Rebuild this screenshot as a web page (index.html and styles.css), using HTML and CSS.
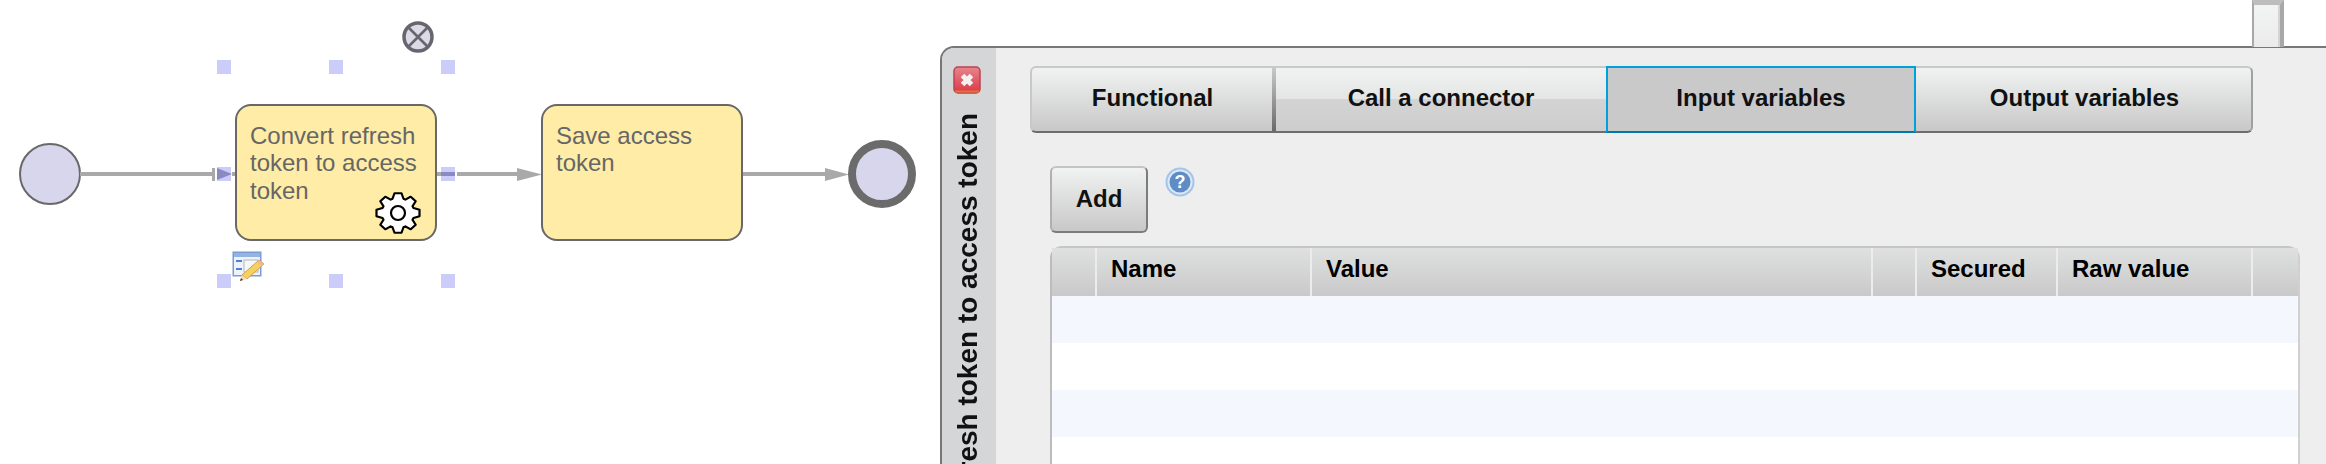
FILE: index.html
```html
<!DOCTYPE html>
<html lang="en">
    <head>
        <meta charset="UTF-8" />
        <title>Process editor</title>
        <link rel="stylesheet" href="styles.css">
    </head>
    <body>
        <div class="diagram">
            <svg class="edges" width="940" height="464" viewBox="0 0 940 464">
                <circle class="event" cx="50" cy="174" r="30" />

                <!-- start -> first task -->
                <line class="edge" x1="80" y1="174" x2="213" y2="174" />
                <rect class="edge-end" x="212" y="168" width="3" height="13" />
                <line class="edge" x1="232" y1="174" x2="236" y2="174" />

                <!-- first task -> second task -->
                <line class="edge" x1="437" y1="174" x2="441" y2="174" />
                <line class="edge" x1="457" y1="174" x2="520" y2="174" />
                <polygon class="arrow" points="517,168 542,174.5 517,181" />

                <!-- second task -> end -->
                <line class="edge" x1="743" y1="174" x2="828" y2="174" />
                <polygon class="arrow" points="825,168 849,174.5 825,181" />

                <circle class="event event-end" cx="882" cy="174" r="30" />

                <!-- selection handles -->
                <rect class="handle" x="217" y="60" width="14" height="14" />
                <rect class="handle" x="329" y="60" width="14" height="14" />
                <rect class="handle" x="441" y="60" width="14" height="14" />
                <rect class="handle" x="217" y="167" width="14" height="14" />
                <rect class="handle" x="441" y="167" width="14" height="14" />
                <rect class="handle" x="217" y="274" width="14" height="14" />
                <rect class="handle" x="329" y="274" width="14" height="14" />
                <rect class="handle" x="441" y="274" width="14" height="14" />

                <polygon class="edge-selected" points="217,168 232,174 217,180" />
                <rect class="edge-selected" x="441" y="172" width="14" height="4" />
            </svg>

            <div class="task task-first">Convert refresh token to access token</div>
            <div class="task task-second">Save access token</div>

            <svg class="gear" width="50" height="46" viewBox="-25 -23 50 46">
                <polygon
                    transform="scale(1 0.92)"
                    points="-5.5,-15.5 -3.5,-21.5 3.5,-21.5 5.5,-15.5 7.4,-14.5 12.7,-17.7 17.7,-12.7 14.5,-7.4 15.5,-5.5 21.5,-3.5 21.5,3.5 15.5,5.5 14.5,7.4 17.7,12.7 12.7,17.7 7.4,14.5 5.5,15.5 3.5,21.5 -3.5,21.5 -5.5,15.5 -7.4,14.5 -12.7,17.7 -17.7,12.7 -14.5,7.4 -15.5,5.5 -21.5,3.5 -21.5,-3.5 -15.5,-5.5 -14.5,-7.4 -17.7,-12.7 -12.7,-17.7 -7.4,-14.5"
                />
                <circle cx="0" cy="0" r="7" />
            </svg>

            <svg class="delete-icon" width="34" height="34" viewBox="0 0 34 34">
                <circle cx="17" cy="17" r="14" />
                <path d="M7.5 7.5 L26.5 26.5 M26.5 7.5 L7.5 26.5" />
            </svg>

            <svg class="edit-icon" width="34" height="32" viewBox="0 0 34 32">
                <rect x="0.5" y="0.5" width="29" height="25" fill="#7b9cd2" />
                <rect x="2" y="2" width="26" height="4" fill="#93b3e4" />
                <rect x="2" y="6" width="26" height="18" fill="#eef2f9" />
                <rect x="4" y="9" width="6" height="2" fill="#4f7fd0" />
                <rect x="4" y="17" width="6" height="2" fill="#4f7fd0" />
                <rect x="12" y="9" width="14" height="12" fill="#f7f7f7" stroke="#b4b8be" />
                <path d="M10 24 L27 9 L32 13 L15 28 Z" fill="#f3d25e" stroke="#d79a54" />
                <path d="M27 9 L32 13 L30 15 L25 11 Z" fill="#eeb98e" />
                <path d="M10 24 L15 28 L8 30 Z" fill="#f2dcb4" />
                <path d="M9 27 L11 29 L8 30 Z" fill="#4b2d10" />
            </svg>
        </div>

        <div class="scroll-tab"></div>

        <div class="panel">
            <div class="panel-side">
                <svg class="panel-close" width="28" height="28" viewBox="0 0 28 28">
                    <defs>
                        <linearGradient id="close-fill" x1="0" y1="0" x2="0" y2="1">
                            <stop offset="0" stop-color="#e9858e" />
                            <stop offset="0.55" stop-color="#e05a66" />
                            <stop offset="1" stop-color="#d83a44" />
                        </linearGradient>
                    </defs>
                    <rect x="1" y="1" width="26" height="26" rx="4" fill="url(#close-fill)" stroke="#b9444e" stroke-width="1.5" />
                    <rect x="2" y="24.5" width="24" height="2" fill="#ea7238" />
                    <path class="close-mark" d="M9.5 9.5 L18.5 18.5 M18.5 9.5 L9.5 18.5" />
                </svg>
                <div class="panel-title">Convert refresh token to access token</div>
            </div>

            <div class="panel-body">
                <div class="tabs">
                    <button class="tab tab-functional">Functional</button>
                    <button class="tab tab-connector">Call a connector</button>
                    <button class="tab tab-input active">Input variables</button>
                    <button class="tab tab-output">Output variables</button>
                </div>

                <div class="actions">
                    <button class="add-button">Add</button>
                    <svg class="help-icon" width="30" height="30" viewBox="0 0 30 30">
                        <circle cx="15" cy="15" r="14.5" fill="#a6c4e8" />
                        <circle cx="15" cy="15" r="12.5" fill="#dbe8f7" />
                        <circle cx="15" cy="15" r="10.5" fill="#5f8cc4" />
                        <text x="15" y="21" text-anchor="middle" class="help-mark">?</text>
                    </svg>
                </div>

                <table class="variables">
                    <colgroup>
                        <col class="col-index" />
                        <col class="col-name" />
                        <col class="col-value" />
                        <col class="col-gap" />
                        <col class="col-secured" />
                        <col class="col-raw" />
                        <col class="col-last" />
                    </colgroup>
                    <thead>
                        <tr>
                            <th></th>
                            <th>Name</th>
                            <th>Value</th>
                            <th></th>
                            <th>Secured</th>
                            <th>Raw value</th>
                            <th></th>
                        </tr>
                    </thead>
                    <tbody>
                        <tr class="odd"><td></td><td></td><td></td><td></td><td></td><td></td><td></td></tr>
                        <tr><td></td><td></td><td></td><td></td><td></td><td></td><td></td></tr>
                        <tr class="odd"><td></td><td></td><td></td><td></td><td></td><td></td><td></td></tr>
                        <tr><td></td><td></td><td></td><td></td><td></td><td></td><td></td></tr>
                    </tbody>
                </table>
            </div>
        </div>
    </body>
</html>
```

FILE: styles.css
```css
html,
body {
    height: 100%;
}

body {
    margin: 0;
    background-color: #fff;
    font-family: "Liberation Sans", Arial, sans-serif;
    display: flex;
    overflow: hidden;
    position: relative;
}

/* diagram */

.diagram {
    position: relative;
    flex: 0 0 940px;
    height: 464px;
}

.edges {
    position: absolute;
    left: 0;
    top: 0;
}

.event {
    fill: #d8d6ec;
    stroke: #686868;
    stroke-width: 2;
}

.event-end {
    stroke: #6b6b6b;
    stroke-width: 8;
}

.edge {
    stroke: #a9a9a9;
    stroke-width: 4;
}

.edge-end,
.arrow {
    fill: #a9a9a9;
}

.handle {
    fill: #ccccfa;
}

.edge-selected {
    fill: #8a8ac2;
}

.task {
    position: absolute;
    top: 104px;
    box-sizing: border-box;
    width: 202px;
    height: 137px;
    padding: 16px 10px 0 13px;
    background-color: #ffeca6;
    border: 2px solid #686868;
    border-radius: 16px;
    color: #666;
    font-size: 24px;
    line-height: 27.3px;
}

.task-first {
    left: 235px;
}

.task-second {
    left: 541px;
}

.gear {
    position: absolute;
    left: 373px;
    top: 190px;
}

.gear polygon,
.gear circle {
    fill: #fff;
    stroke: #000;
    stroke-width: 2.2;
    stroke-linejoin: round;
}

.delete-icon {
    position: absolute;
    left: 401px;
    top: 20px;
    filter: blur(0.5px);
}

.delete-icon circle {
    fill: #dcdae6;
    stroke: #66666e;
    stroke-width: 3.5;
}

.delete-icon path {
    fill: none;
    stroke: #66666e;
    stroke-width: 2.6;
}

.edit-icon {
    position: absolute;
    left: 232px;
    top: 251px;
}

/* piece of the window behind the panel */

.scroll-tab {
    position: absolute;
    left: 2252px;
    top: 0;
    box-sizing: border-box;
    width: 32px;
    height: 47px;
    background: linear-gradient(#f2f3f3, #ebebeb);
    border-left: 2px solid #a8a8a8;
    border-right: 4px solid #a8a8a8;
    border-top: 5px solid #bdbdbd;
    box-shadow: inset -2px 0 0 #d4d4d4;
}

/* panel */

.panel {
    flex: 1;
    display: flex;
    height: 418px;
    margin-top: 46px;
    border-top: 2px solid #777;
    border-left: 2px solid #777;
    border-top-left-radius: 14px;
    background-color: #eee;
    overflow: hidden;
}

.panel-side {
    flex: 0 0 54px;
    box-sizing: border-box;
    display: flex;
    flex-direction: column;
    align-items: center;
    padding-top: 18px;
    padding-right: 2px;
    background-color: #d5d6d8;
    overflow: hidden;
}

.panel-close {
    flex: none;
    margin-bottom: 19px;
    margin-right: 3px;
}

.close-mark {
    fill: none;
    stroke: #f6f1f1;
    stroke-width: 5;
}

.panel-title {
    flex: none;
    writing-mode: vertical-rl;
    transform: rotate(180deg);
    white-space: nowrap;
    color: #111;
    font-size: 28px;
    font-weight: bold;
    line-height: 32px;
}

.panel-body {
    flex: 1;
    padding: 18px 26px 0 34px;
    min-width: 0;
}

.tabs {
    display: flex;
    width: 1223px;
    height: 67px;
}

.tab {
    box-sizing: border-box;
    height: 67px;
    padding: 0 0 3px;
    border-style: solid;
    border-width: 2px 0;
    border-color: #c9c9c9 transparent #6d6d6d;
    background: linear-gradient(#f1f2f2, #c8c8c8);
    color: #111;
    font-family: inherit;
    font-size: 24px;
    font-weight: bold;
}

.tab-functional {
    width: 246px;
    padding-right: 3px;
    border-left: 2px solid #c9c9c9;
    border-radius: 6px 0 0 6px;
    background:
        linear-gradient(#c8c8c8, #6a6a6a) right / 4px 100% no-repeat,
        linear-gradient(#f1f2f2, #c8c8c8);
}

.tab-connector {
    width: 330px;
    background: linear-gradient(#f1f3f3, #e4e5e5 49%, #d4d4d4 49%, #cdcdcd);
}

.tab-input {
    width: 310px;
}

.tab-output {
    width: 337px;
    padding-left: 2px;
    border-right: 2px solid #a0a0a0;
    border-radius: 0 6px 6px 0;
}

.tab.active {
    background: #c9c9c9;
    border: 2px solid #00a0dc;
    border-bottom-color: #0079a8;
}

.actions {
    display: flex;
    align-items: flex-start;
    margin: 33px 0 13px 20px;
}

.add-button {
    box-sizing: border-box;
    width: 98px;
    height: 67px;
    padding: 0 0 2px;
    border: 2px solid #7c7c7c;
    border-top-color: #c4c4c4;
    border-left-color: #b0b0b0;
    border-radius: 6px;
    background: linear-gradient(#f1f2f2, #c8c8c8);
    color: #111;
    font-family: inherit;
    font-size: 24px;
    font-weight: bold;
}

.help-icon {
    margin: 1px 0 0 17px;
}

.help-mark {
    fill: #fff;
    font-size: 18px;
    font-weight: bold;
}

.variables {
    box-sizing: border-box;
    width: 1250px;
    margin-left: 20px;
    table-layout: fixed;
    border-collapse: separate;
    border-spacing: 0;
    background-color: #fff;
    border-top: 2px solid #c6c6c6;
    border-left: 2px solid #bcbcbc;
    border-right: 2px solid #d0d0d0;
    border-top-left-radius: 12px;
    border-top-right-radius: 12px;
}

.col-index {
    width: 45px;
}

.col-name {
    width: 215px;
}

.col-value {
    width: 561px;
}

.col-gap {
    width: 44px;
}

.col-secured {
    width: 141px;
}

.col-raw {
    width: 195px;
}

.variables th {
    box-sizing: border-box;
    height: 48px;
    padding: 0 0 6px 14px;
    background: linear-gradient(#dfe0e0, #c9c9c9);
    border-right: 2px solid #ececec;
    color: #000;
    font-size: 24px;
    font-weight: bold;
    text-align: left;
}

.variables th:last-child {
    border-right: none;
}

.variables td {
    height: 47px;
    padding: 0;
}

.variables .odd td {
    background-color: #f4f8fe;
}
```
